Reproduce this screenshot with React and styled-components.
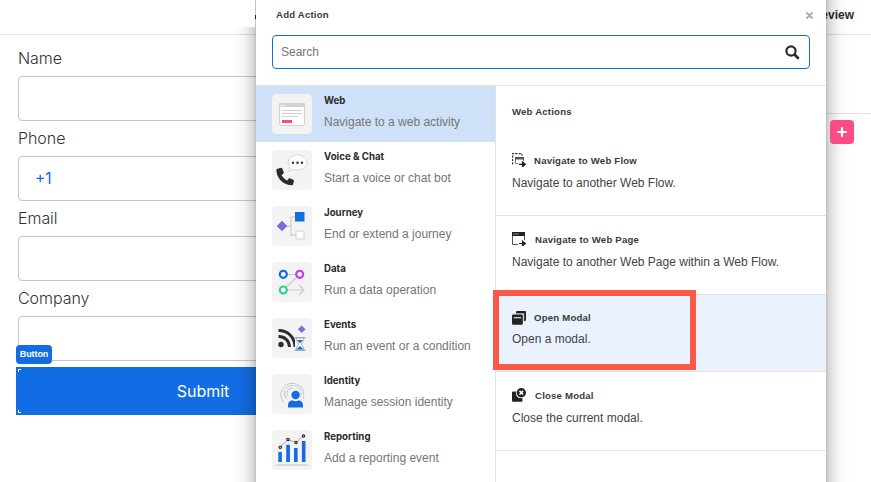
import React from 'react';
import styled, { createGlobalStyle } from 'styled-components';

const Global = createGlobalStyle`
  * { box-sizing: border-box; }
  body { margin: 0; background: #fff; overflow: hidden; }
  svg { display: block; flex: none; }
`;

const Page = styled.div`
  position: relative;
  width: 871px;
  height: 482px;
  overflow: hidden;
  background: #fff;
  color: #333;
  font-family: "Liberation Sans", Arial, sans-serif;
`;

const TopBar = styled.header`
  display: flex;
  justify-content: flex-end;
  height: 35px;
  padding: 8px 17px 0 0;
  border-bottom: 1px solid #e2e2e2;
  font: 700 12px/14px "Liberation Sans", Arial, sans-serif;
  color: #2b2b2b;
`;

const TopBarCap = styled.div`
  position: absolute;
  left: 0;
  top: 0;
  width: 255px;
  height: 27px;
  background: #fff;
`;

const CapEdge = styled.i`
  position: absolute;
  left: 255px;
  top: 15px;
  width: 1px;
  height: 4px;
  background: #222;
`;

const Workspace = styled.div`
  display: flex;
  justify-content: space-between;
`;

const Form = styled.form`
  width: 374px;
  padding: 11px 0 0 16px;
`;

const Field = styled.div`
  display: flex;
  flex-direction: column;
  height: 80px;
  padding-left: 2px;
`;

const Label = styled.label`
  height: 30px;
  font: 400 16px/25px Inter, sans-serif;
  font-weight: 350;
  letter-spacing: -0.05px;
  color: #333;
`;

const Input = styled.div`
  height: 45px;
  padding: 0 16px;
  border: 1px solid #c6c6c6;
  border-radius: 4px;
  font: 400 15.5px/43px Inter, sans-serif;
  color: #126ce4;
`;

const SubmitWrap = styled.div`
  position: relative;
  margin-top: 1px;
`;

const Submit = styled.div`
  height: 48px;
  background: #126ce4;
  color: #fff;
  font: 400 16px/48px Inter, sans-serif;
  text-align: center;
  padding-left: 16px;
`;

const Tag = styled.span`
  position: absolute;
  left: 0;
  top: -22px;
  width: 36px;
  height: 19px;
  border-radius: 4px;
  background: #126ce4;
  color: #fff;
  font: 700 9px/19px "Liberation Sans", Arial, sans-serif;
  letter-spacing: -0.1px;
  text-align: center;
`;

const Corner = styled.i`
  position: absolute;
  left: 2px;
  top: ${p => (p.$bottom ? 43 : 2)}px;
  width: 3px;
  height: 3px;
  border: solid #fff;
  border-width: ${p => (p.$bottom ? '0 0 1px 1px' : '1px 0 0 1px')};
`;

const SidePane = styled.aside`
  width: 80px;
  padding-left: 39px;
`;

const SideHead = styled.div`
  height: 79px;
  margin-left: -39px;
  margin-bottom: 6px;
  border-bottom: 1px solid #e2e2e2;
`;

const AddButton = styled.button`
  position: relative;
  z-index: 1;
  display: flex;
  align-items: center;
  justify-content: center;
  width: 24px;
  height: 24px;
  padding: 0;
  border: 0;
  border-radius: 4px;
  background: #fc4c84;
`;

const Modal = styled.section`
  position: absolute;
  left: 256px;
  top: 0;
  width: 570px;
  height: 482px;
  display: flex;
  flex-direction: column;
  background: #fff;
`;

const ModalShadow = styled.div`
  position: absolute;
  left: 256px;
  top: -40px;
  width: 570px;
  height: 580px;
  box-shadow: 0 0 20px rgba(0, 0, 0, 0.4), 0 0 3px rgba(0, 0, 0, 0.15);
`;

const ModalHead = styled.div`
  display: flex;
  justify-content: space-between;
  height: 35px;
  padding: 9px 12px 0 20px;
`;

const Heading = styled.h2`
  margin: 0;
  padding-top: ${p => p.$drop || 0}px;
  font: 700 9.6px/12px "Liberation Sans", Arial, sans-serif;
  letter-spacing: 0.2px;
  white-space: nowrap;
  color: #3a3a3a;
`;

const CloseIcon = styled.svg`
  margin-top: 2px;
`;

const SearchBox = styled.div`
  display: flex;
  align-items: center;
  justify-content: space-between;
  height: 34px;
  margin: 0 16px 16px;
  padding: 0 9px 0 8px;
  border: 1px solid #126ce4;
  border-radius: 4px;
  font-size: 12px;
  color: #757575;
`;

const ModalBody = styled.div`
  display: grid;
  grid-template-columns: 239px 1fr;
  flex: 1;
  min-height: 0;
  border-top: 1px solid #e2e2e2;
`;

const Categories = styled.nav`
  overflow: hidden;
`;

const Category = styled.div`
  display: flex;
  gap: 12px;
  height: 56px;
  padding: 8px 16px;
  background: ${p => (p.$active ? '#cfe1f9' : '#fff')};
`;

const Tile = styled.svg`
  border-radius: 4px;
  background: #f3f3f3;
`;

const CategoryTitle = styled.div`
  font: 700 9.7px/13px Inter, sans-serif;
  color: #2b2b2b;
`;

const CategoryText = styled.div`
  margin-top: 7px;
  font-size: 12px;
  line-height: 16px;
  white-space: nowrap;
  color: #757575;
`;

const Actions = styled.div`
  border-left: 1px solid #e2e2e2;
`;

const ActionsTitle = styled.div`
  height: 51px;
  padding: 20px 16px 0;
`;

const Action = styled.div`
  height: ${p => p.$height}px;
  padding: 16px 16px 0;
  border-bottom: 1px solid #e2e2e2;
  background: ${p => (p.$active ? '#eaf2fe' : '#fff')};
`;

const ActionHead = styled.div`
  display: flex;
  align-items: flex-start;
  gap: ${p => p.$gap}px;
  height: 14px;
`;

const ActionText = styled.p`
  margin: ${p => p.$gap}px 0 0;
  font-size: 12px;
  line-height: 16px;
  white-space: nowrap;
  color: #444;
`;

const Highlight = styled.div`
  position: absolute;
  left: 493px;
  top: 290px;
  width: 203px;
  height: 80px;
  border: 6px solid #fc5848;
`;

const art = {
  web: (
    <>
      <rect x="7.500" y="9.500" width="25" height="22" rx="1.500" fill="#fff" stroke="#d2d2d2" />
      <path d="M7 9h26v4H7z" fill="#d2d2d2" />
      <path d="M8.500 11.500h5" stroke="#fff" strokeDasharray="1 1" />
      <path d="M10 16.500h20M10 19.500h20M10 22.500h16" stroke="#cfcfcf" />
      <path d="M10 26h10v3H10z" fill="#fc4c84" />
    </>
  ),
  voice: (
    <>
      <path d="M25.500 5c5.300 0 9.500 3.200 9.500 7.500S31 20 25.500 20c-1.800 0-3.200-.3-4.600-1-1.200 1.300-2.700 2-4.400 2.200 1.200-1.300 1.700-2.500 1.600-4-1.300-1.300-2-2.900-2-4.700C16.100 8.200 20.200 5 25.500 5z" fill="#fff" stroke="#d8d8d8" />
      <circle cx="21" cy="12.700" r="1.200" fill="#333" /><circle cx="25.500" cy="12.700" r="1.200" fill="#333" /><circle cx="30" cy="12.700" r="1.200" fill="#333" />
      <path d="M5 19l4-1.200c.5-.1.900.1 1.100.5l1.700 4c.2.400 0 .8-.3 1.100l-2 1.700c1.400 2.500 3.200 4.200 5.700 5.400l1.600-1.900c.3-.3.700-.5 1.100-.3l3.600 1.700c.4.200.6.600.5 1l-.9 3.600c-.1.500-.5.700-1 .7C11.500 35.300 4.400 28.300 4.400 20c0-.5.200-.9.600-1z" fill="#2b2b2b" />
    </>
  ),
  journey: (
    <>
      <path d="M14 20h5M24 11h-5v18h5" fill="none" stroke="#d2d2d2" strokeWidth="1.300" />
      <path d="M10 14.700l5.300 5.300-5.300 5.300L4.700 20z" fill="#8268dd" />
      <path d="M23 6h9.500v9.500H23z" fill="#126ce4" />
      <path d="M24 25h8v8h-8z" fill="#fff" stroke="#d2d2d2" />
    </>
  ),
  data: (
    <>
      <path d="M14 12.500h10M25 15L13 26M15 28h16M27 23l5 5-5 5" fill="none" stroke="#cacaca" strokeWidth="1.200" />
      <circle cx="11.300" cy="12.300" r="3.500" fill="#fff" stroke="#126ce4" strokeWidth="2.200" />
      <circle cx="27.700" cy="12.300" r="3.500" fill="#fff" stroke="#c639ed" strokeWidth="2.200" />
      <circle cx="11.300" cy="28" r="3.500" fill="#fff" stroke="#29d18b" strokeWidth="2.200" />
    </>
  ),
  events: (
    <>
      <circle cx="9" cy="26.500" r="2.700" fill="#2b2b2b" />
      <path d="M6.500 18.500a10.500 10.500 0 0 1 11 10.500M6.500 12.500c9.500 0 16 6.500 16.500 16.500" fill="none" stroke="#2b2b2b" strokeWidth="2.900" />
      <path d="M29.700 7.500l3.800 3.800-3.800 3.800-3.800-3.800z" fill="#8268dd" />
      <path d="M23 19h10v14H23z" fill="#f3f3f3" />
      <path d="M24 20h8c0 3-2.500 4-2.500 6s2.500 3 2.500 6h-8c0-3 2.500-4 2.500-6s-2.500-3-2.500-6z" fill="#fff" stroke="#aaa" />
      <path d="M25 22h6l-3 3.200zM28 28l3.700 3.600h-7.400z" fill="#126ce4" />
      <path d="M22.500 19.500h11M22.500 32.300h11" stroke="#aaa" strokeWidth="1.200" />
    </>
  ),
  identity: (
    <>
      <g fill="none" stroke="#c6c6c6" strokeWidth="1">
        <path d="M12 28.500A11.400 11.400 0 1 1 31 25" strokeDasharray="14 1" />
        <path d="M14.500 25a8.300 8.300 0 1 1 13.800-2" strokeDasharray="9 1" />
        <path d="M16 22.500a5.300 5.300 0 0 1 5-8.500" />
      </g>
      <circle cx="23.600" cy="21" r="4.200" fill="#126ce4" />
      <path d="M16 33.500v-2c0-3 1.500-4.500 4-5.200 2 1.400 5 1.400 7 0 2.500.7 4 2.200 4 5.200v2z" fill="#126ce4" />
    </>
  ),
  reporting: (
    <>
      <path d="M6.300 22h3.600v10H6.300zM14.200 14.700h3.700V32h-3.700zM22 18h3.600v14H22zM29.900 11h3.600v21h-3.600z" fill="#126ce4" />
      <path d="M4.500 35h31" stroke="#d2d2d2" strokeWidth="1.700" />
      <path d="M8 17l8-7.500 8 3 7.500-6.500" fill="none" stroke="#aaa" />
      <g fill="#fff" stroke="#2b2b2b" strokeWidth="1.200"><circle cx="8.300" cy="17.200" r="1.200" /><circle cx="16" cy="9.500" r="1.200" /><circle cx="24" cy="12.500" r="1.200" /><circle cx="31.500" cy="6" r="1.200" /></g>
    </>
  ),
};

const glyphs = {
  flow: (
    <>
      <path d="M.6 11.500V.6h9.400v2" fill="none" stroke="#333" strokeWidth="1.200" strokeDasharray="2.200 1.200" />
      <path d="M3.500 10V4.500h8V8M3.500 10.500h3" fill="none" stroke="#777" />
      <path d="M3 4h9v2.500H3z" fill="#555" />
      <path d="M7 11.300h5M10.500 9L13.300 11.300l-2.800 2.300z" fill="#222" stroke="#222" strokeWidth="1.200" />
    </>
  ),
  page: (
    <>
      <path d="M6 12.500H.5V1h12v7" fill="none" stroke="#555" />
      <path d="M0 0h13v4H0z" fill="#222" />
      <path d="M1.500 2h6" stroke="#ddd" strokeWidth="1" strokeDasharray="1 1" />
      <path d="M7 11.500h5M10.500 9.200L13.300 11.500l-2.800 2.300z" fill="#222" stroke="#222" strokeWidth="1.200" />
    </>
  ),
  open: (
    <>
      <path d="M5 0h8a1 1 0 0 1 1 1v8a1 1 0 0 1-1 1h-1V2.300H4V1a1 1 0 0 1 1-1z" fill="#222" />
      <path d="M3.700 2.600H12V10.500" fill="none" stroke="#888" strokeWidth=".7" />
      <rect x="0" y="3.500" width="10.800" height="10.300" rx="1.200" fill="#222" />
      <path d="M1.700 6.700h7.400" stroke="#eee" strokeWidth="1.100" />
    </>
  ),
  close: (
    <>
      <path d="M0 4.500q0-1 1-1h3V6c.5 2.600 2.800 4.300 6.500 4.500v2.300q0 1-1 1H1q-1 0-1-1z" fill="#222" />
      <circle cx="9.300" cy="4.700" r="5.400" fill="#fff" />
      <circle cx="9.300" cy="4.700" r="4.700" fill="#222" />
      <path d="M7.500 2.900l3.600 3.600M11.100 2.900L7.500 6.500" stroke="#fff" strokeWidth="1.500" />
    </>
  ),
};

const categories = [
  ['web', 'Web', 'Navigate to a web activity'],
  ['voice', 'Voice & Chat', 'Start a voice or chat bot'],
  ['journey', 'Journey', 'End or extend a journey'],
  ['data', 'Data', 'Run a data operation'],
  ['events', 'Events', 'Run an event or a condition'],
  ['identity', 'Identity', 'Manage session identity'],
  ['reporting', 'Reporting', 'Add a reporting event'],
];

const actions = [
  { icon: 'flow', title: 'Navigate to Web Flow', text: 'Navigate to another Web Flow.', height: 79, head: 8, gap: 8, drop: 2 },
  { icon: 'page', title: 'Navigate to Web Page', text: 'Navigate to another Web Page within a Web Flow.', height: 79, head: 9, gap: 8, drop: 2 },
  { icon: 'open', title: 'Open Modal', text: 'Open a modal.', height: 77, head: 8, gap: 6, drop: 1, active: true },
  { icon: 'close', title: 'Close Modal', text: 'Close the current modal.', height: 79, head: 9, gap: 8, drop: 2 },
];

const fields = [['Name'], ['Phone', '+1'], ['Email'], ['Company']];

export default function App() {
  return (
    <Page>
      <Global />
      <TopBar>Preview</TopBar>
      <Workspace>
        <Form>
          {fields.map(([name, value]) => (
            <Field key={name}>
              <Label>{name}</Label>
              <Input>{value}</Input>
            </Field>
          ))}
          <SubmitWrap>
            <Submit>Submit</Submit>
            <Corner />
            <Corner $bottom />
            <Tag>Button</Tag>
          </SubmitWrap>
        </Form>
        <SidePane>
          <SideHead />
          <AddButton aria-label="Add">
            <svg width="10" height="10" viewBox="0 0 10 10"><path d="M5 .3v9.400M.3 5h9.400" stroke="#fff" strokeWidth="2.200" /></svg>
          </AddButton>
        </SidePane>
      </Workspace>

      <ModalShadow />
      <TopBarCap />
      <CapEdge />
      <Modal>
        <ModalHead>
          <Heading>Add Action</Heading>
          <CloseIcon width="9" height="9" viewBox="0 0 9 9"><path d="M1.400 1.400l6.200 6.200M7.600 1.400L1.400 7.600" stroke="#aaa" strokeWidth="2" /></CloseIcon>
        </ModalHead>
        <SearchBox>
          Search
          <svg width="15" height="15" viewBox="0 0 15 15">
            <circle cx="6" cy="6" r="4.600" fill="none" stroke="#2b2b2b" strokeWidth="2.200" />
            <path d="M9.300 9.300l4.400 4.400" stroke="#2b2b2b" strokeWidth="2.700" />
          </svg>
        </SearchBox>
        <ModalBody>
          <Categories>
            {categories.map(([icon, title, text], i) => (
              <Category key={icon} $active={i === 0}>
                <Tile width="40" height="40" viewBox="0 0 40 40">{art[icon]}</Tile>
                <div>
                  <CategoryTitle>{title}</CategoryTitle>
                  <CategoryText>{text}</CategoryText>
                </div>
              </Category>
            ))}
          </Categories>
          <Actions>
            <ActionsTitle><Heading>Web Actions</Heading></ActionsTitle>
            {actions.map(a => (
              <Action key={a.icon} $height={a.height} $active={a.active}>
                <ActionHead $gap={a.head}>
                  <svg width="14" height="14" viewBox="0 0 14 14">{glyphs[a.icon]}</svg>
                  <Heading as="h3" $drop={a.drop}>{a.title}</Heading>
                </ActionHead>
                <ActionText $gap={a.gap}>{a.text}</ActionText>
              </Action>
            ))}
          </Actions>
        </ModalBody>
      </Modal>
      <Highlight />
    </Page>
  );
}
